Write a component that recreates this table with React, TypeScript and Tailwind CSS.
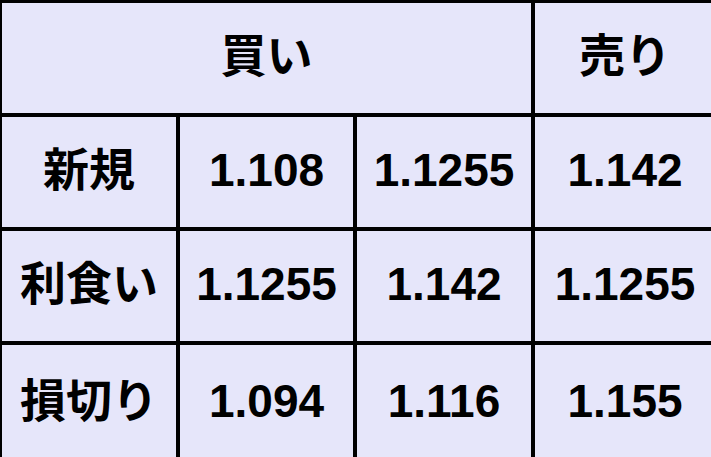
const rows = [
  ['新規', '1.108', '1.1255', '1.142'],
  ['利食い', '1.1255', '1.142', '1.1255'],
  ['損切り', '1.094', '1.116', '1.155'],
];

function Cell({ children, className = '' }: { children: React.ReactNode; className?: string }) {
  return (
    <div className={`flex items-center justify-center bg-[#e6e6fa] pb-[4px] text-[46px] font-bold text-black ${className}`}>
      {children}
    </div>
  );
}

export default function App() {
  return (
    <div
      className="w-[711px] h-[457px] overflow-hidden bg-black pt-[3px] pl-[2px]"
      style={{ fontFamily: '"Liberation Sans", Arial, "Noto Sans CJK JP", sans-serif' }}
    >
      <div className="grid h-[458px] w-[713px] grid-cols-[174px_173px_174px_1fr] grid-rows-[110px_110px_110px_1fr] gap-[4px]">
        <Cell className="col-span-3">買い</Cell>
        <Cell>売り</Cell>
        {rows.map((r) =>
          r.map((v, i) => <Cell key={r[0] + i}>{v}</Cell>)
        )}
      </div>
    </div>
  );
}
